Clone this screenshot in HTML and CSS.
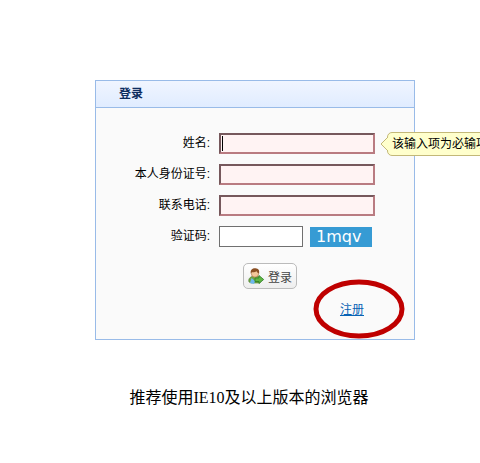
FILE: index.html
```html
<!DOCTYPE html>
<html lang="zh">

<head>
  <meta charset="UTF-8">
  <meta name="viewport" content="width=device-width, initial-scale=1.0">
  <title>登录</title>
  <link rel="stylesheet" href="styles.css">
</head>

<body>
  <main class="panel">
    <h1 class="panel-header">登录</h1>

    <form class="login-form">
      <div class="row">
        <label for="name">姓名:</label>
        <div class="field">
          <input type="text" id="name" class="required focused">
          <!-- 必填提示 -->
          <div class="tip">
            <svg class="tip-arrow" width="8" height="14" viewBox="0 0 8 14">
              <path d="M8 0 L1 7 L8 14" fill="#ffffcc" stroke="#c3b878" />
            </svg>
            该输入项为必输项
          </div>
        </div>
      </div>
      <div class="row">
        <label for="idcard">本人身份证号:</label>
        <input type="text" id="idcard" class="required">
      </div>
      <div class="row">
        <label for="phone">联系电话:</label>
        <input type="text" id="phone" class="required">
      </div>
      <div class="row">
        <label for="code">验证码:</label>
        <input type="text" id="code" class="code">
        <span class="captcha">1mqv</span>
      </div>

      <button type="button" class="login-button">
        <svg width="16" height="16" viewBox="0 0 16 16">
          <path d="M1 14 C0 11 2 9 5 8 L10 8 C12 9 13 12 12 15 L3 15 Z" fill="#6fa544" stroke="#4c7c32" stroke-width=".6" />
          <path d="M3.500 10 L7 13 L6 16 L2 15 Z" fill="#6db8ef" />
          <circle cx="7" cy="5.500" r="3.700" fill="#f3c79a" stroke="#a56a3c" stroke-width=".6" />
          <path d="M2.800 5.500 C2 1.500 5 0 7.500 .3 C10.500 .5 11.800 2.500 11 5.500 C9.500 5 9 4 8.500 3.300 C7 4.500 5 4.500 4 4 Z" fill="#8a4f24" />
          <path d="M7 10 L11 10 L11 7.500 L15.700 11.500 L11 15.500 L11 13.500 L7 13.500 Z" fill="#5fb643" stroke="#2f7d26" stroke-width=".8" />
        </svg>
        登录
      </button>

      <div class="register">
        <a href="#">注册</a>
        <svg class="circle" width="92" height="60" viewBox="0 0 92 60">
          <ellipse cx="46" cy="30" rx="43" ry="27" fill="none" stroke="#bf0000" stroke-width="5" />
        </svg>
      </div>
    </form>
  </main>

  <p class="notice">推荐使用IE10及以上版本的浏览器</p>
</body>

</html>
```

FILE: styles.css
```css
* {
  box-sizing: border-box;
  margin: 0;
  padding: 0;
}

body {
  padding: 80px 0 0 30px;
  background-color: #ffffff;
  color: #000000;
  font-family: "Liberation Sans", "Noto Sans CJK SC", sans-serif;
  font-size: 12px;
  overflow-x: hidden;
}

.panel {
  width: 320px;
  max-width: 100%;
  margin: 0 auto;
  border: 1px solid #99bbe8;
  background-color: #fafafa;
}

.panel-header {
  padding: 0 23px;
  border-bottom: 1px solid #99bbe8;
  background: linear-gradient(#f0f5ff, #e0ecff);
  color: #0e2d5f;
  font-size: 12px;
  line-height: 26px;
}

.login-form {
  display: flex;
  flex-direction: column;
  gap: 10px;
  padding: 25px 0 18px;
}

.row {
  display: flex;
  align-items: center;
}

.row label {
  width: 114px;
  margin-right: 9px;
  font-size: 12px;
  line-height: 21px;
  text-align: right;
  white-space: nowrap;
}

.field {
  position: relative;
  display: flex;
}

input {
  height: 21px;
  padding: 0 3px;
  border: 1px solid #707070;
  background-color: #ffffff;
  outline: none;
}

.required {
  width: 156px;
  border: 2px solid;
  border-color: #76585c #b97b81 #b97b81 #76585c;
  background-color: #fff3f3;
}

/* 光标 */
.focused {
  background-image: linear-gradient(#000000, #000000);
  background-position: 1px 1px;
  background-repeat: no-repeat;
  background-size: 1px 15px;
}

.code {
  width: 84px;
}

.captcha {
  width: 62px;
  margin-left: 7px;
  padding-left: 6px;
  background-color: #369bd4;
  color: #ffffff;
  font-family: "DejaVu Sans", sans-serif;
  font-size: 16px;
  line-height: 20px;
}

.tip {
  position: absolute;
  top: -1px;
  left: 168px;
  padding: 0 4px;
  border: 1px solid #c3b878;
  border-radius: 5px;
  background-color: #ffffcc;
  font-size: 12px;
  line-height: 22px;
  white-space: nowrap;
}

.tip-arrow {
  position: absolute;
  top: 4px;
  left: -8px;
}

.login-button {
  display: flex;
  align-items: center;
  align-self: flex-start;
  gap: 4px;
  height: 26px;
  margin: 6px 0 0 147px;
  padding: 0 4px;
  border: 1px solid #bbbbbb;
  border-radius: 5px;
  background: linear-gradient(#ffffff, #eeeeee);
  color: #444444;
  font-family: inherit;
  font-size: 12px;
  cursor: pointer;
}

.register {
  position: relative;
  align-self: flex-end;
  margin-right: 50px;
  font-size: 12px;
  line-height: 22px;
}

.register a {
  color: #0863b5;
}

.circle {
  position: absolute;
  top: -20px;
  left: -27px;
  pointer-events: none;
}

.notice {
  margin: 46px 12px 0 0;
  font-family: "Liberation Serif", "Noto Sans CJK SC", serif;
  font-size: 16px;
  line-height: 24px;
  text-align: center;
}
```
